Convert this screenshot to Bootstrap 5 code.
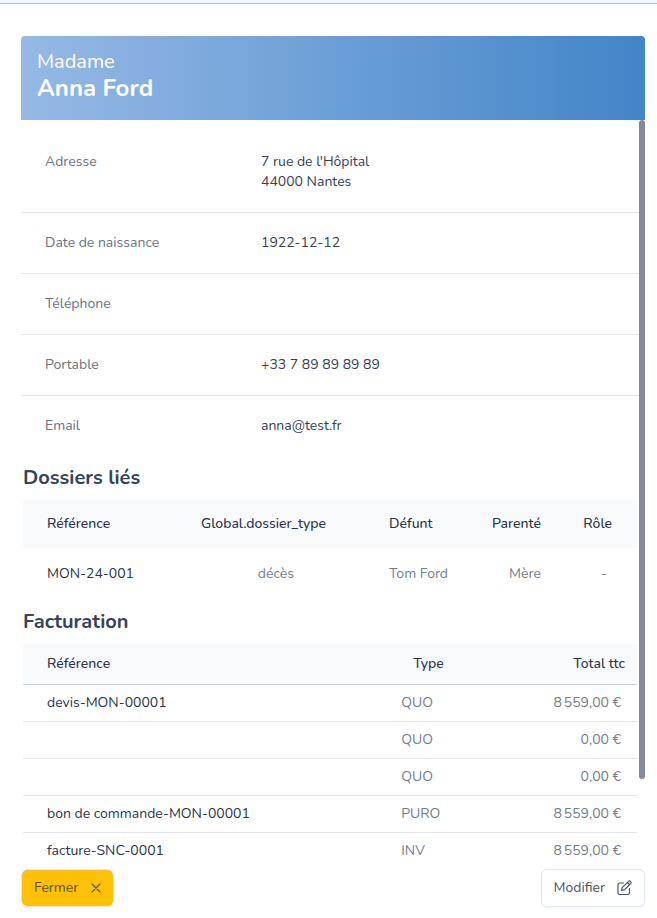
<!DOCTYPE html>
<html lang="fr">
<head>
<meta charset="utf-8">
<meta name="viewport" content="width=device-width, initial-scale=1">
<title>Anna Ford</title>
<link href="https://cdn.jsdelivr.net/npm/bootstrap@5.3.0/dist/css/bootstrap.min.css" rel="stylesheet">
<style>
body{font-family:Nunito,Lato,sans-serif;font-size:14px;line-height:20px;color:#374151;background:#fff}
.top-strip{height:4px;background:#f3f6fd;border-bottom:1px solid #bdbdd0}
.panel{padding:32px 12px 11px 21px;min-height:0}
.hero{background:linear-gradient(90deg,#96b9e5,#4285c8);border-radius:4px 4px 0 0;padding:12px 16px 18px;color:#fff}
.hero-title{font-size:20px;line-height:27px}
.hero-name{font-size:24px;line-height:27px;font-weight:700;margin:0}
.pane{min-height:0}
.pane-body{overflow-y:auto;scrollbar-width:none;min-width:0}
.pane-body::-webkit-scrollbar{display:none}
.thumb{width:6px;height:88%;border-radius:3px;background:#868b98}
.facts{padding-top:12px;margin:0}
.fact{padding:20px 24px;border-bottom:1px solid #e5e7eb}
.fact:last-child{border-bottom:0}
.fact dt{width:216px;font-weight:400;color:#6b7280}
.fact dd{margin:0}
.linked{padding:0 2px}
.section-title{font-size:20px;line-height:28px;font-weight:700;margin:8px 0;color:#374357}
.grid{table-layout:fixed;width:100%;margin:0}
.grid th{font-weight:500;color:#2b3546;background:#f9fafb;white-space:nowrap}
.grid td{color:#767d8b;white-space:nowrap}
.grid th:first-child,.grid td:first-child{padding-left:24px;color:#2b3546}
.files th{padding:14px 4px 14px 0}
.files td{padding:16px 4px 16px 0}
.files .w1{width:25%}.files .w2{width:25%}.files .w3{width:20%}.files .w4{width:15%}
.files .kind{padding-right:36px}
.files .dead{padding-left:59px}
.files th:last-child{padding-right:25px}
.files td:last-child{padding-right:30px}
.bills th{padding:10px 12px 10px 28px;border-bottom:1px solid #cbd2da}
.bills td{padding:8px 16px;border-bottom:1px solid #e5e7eb}
.bills .w1{width:59%}.bills .w2{width:20%}
.act{font-size:14px;line-height:20px;padding:8px 12px;gap:11px;border-radius:6px;box-shadow:0 1px 2px #0000000d;border:1px solid #e2e8f4;color:#4b5563;background:#fff}
.act-close{background:#ffc107;color:#5d4e22;background-clip:padding-box}
</style>
<script src="https://cdn.jsdelivr.net/npm/bootstrap@5.3.0/dist/js/bootstrap.bundle.min.js"></script>
</head>
<body class="vh-100 d-flex flex-column overflow-hidden">
<div class="top-strip flex-shrink-0"></div>
<main class="panel d-flex flex-column flex-grow-1">
  <header class="hero">
    <div class="hero-title">Madame</div>
    <h1 class="hero-name">Anna Ford</h1>
  </header>
  <div class="pane d-flex flex-grow-1">
    <div class="pane-body flex-grow-1">
      <dl class="facts">
        <div class="fact d-flex"><dt>Adresse</dt><dd>7 rue de l'Hôpital<br>44000 Nantes</dd></div>
        <div class="fact d-flex"><dt>Date de naissance</dt><dd>1922-12-12</dd></div>
        <div class="fact d-flex"><dt>Téléphone</dt><dd></dd></div>
        <div class="fact d-flex"><dt>Portable</dt><dd>+33 7 89 89 89 89</dd></div>
        <div class="fact d-flex"><dt>Email</dt><dd>anna@test.fr</dd></div>
      </dl>
      <div class="linked">
        <h2 class="section-title">Dossiers liés</h2>
        <table class="grid files">
          <thead><tr><th class="w1">Référence</th><th class="w2 text-end">Global.dossier_type</th><th class="w3 dead">Défunt</th><th class="w4 text-end">Parenté</th><th class="text-end">Rôle</th></tr></thead>
          <tbody><tr><td>MON-24-001</td><td class="kind text-end">décès</td><td class="dead">Tom Ford</td><td class="text-end">Mère</td><td class="text-end">-</td></tr></tbody>
        </table>
        <h2 class="section-title">Facturation</h2>
        <table class="grid bills">
          <thead><tr><th class="w1">Référence</th><th class="w2">Type</th><th class="text-end">Total ttc</th></tr></thead>
          <tbody>
            <tr><td>devis-MON-00001</td><td>QUO</td><td class="text-end">8&#8239;559,00 €</td></tr>
            <tr><td></td><td>QUO</td><td class="text-end">0,00 €</td></tr>
            <tr><td></td><td>QUO</td><td class="text-end">0,00 €</td></tr>
            <tr><td>bon de commande-MON-00001</td><td>PURO</td><td class="text-end">8&#8239;559,00 €</td></tr>
            <tr><td>facture-SNC-0001</td><td>INV</td><td class="text-end">8&#8239;559,00 €</td></tr>
          </tbody>
        </table>
      </div>
    </div>
    <div class="thumb flex-shrink-0 ms-auto"></div>
  </div>
  <footer class="d-flex justify-content-between">
    <button type="button" class="btn act act-close d-flex align-items-center">Fermer
      <svg width="12" height="12" viewBox="0 0 12 12" fill="none" stroke="currentColor" stroke-width="1.1" stroke-linecap="round" aria-hidden="true"><path d="M3 2l8 8M11 2l-8 8"/></svg>
    </button>
    <button type="button" class="btn act d-flex align-items-center">Modifier
      <svg width="16" height="16" viewBox="0 0 16 16" fill="none" stroke="currentColor" stroke-width="1.2" stroke-linecap="round" stroke-linejoin="round" aria-hidden="true"><path d="M7.500 3H3.800Q2 3 2 4.800V12.700Q2 14.500 3.800 14.500H11.700Q13.500 14.500 13.500 12.700V8.500"/><path d="M5.500 10.500l.7-2.900L12.500 1.300a1.300 1.300 0 0 1 1.900 0l.3.300a1.300 1.300 0 0 1 0 1.900L8.400 9.800zM11.300 2.500l2.200 2.200"/></svg>
    </button>
  </footer>
</main>
</body>
</html>
